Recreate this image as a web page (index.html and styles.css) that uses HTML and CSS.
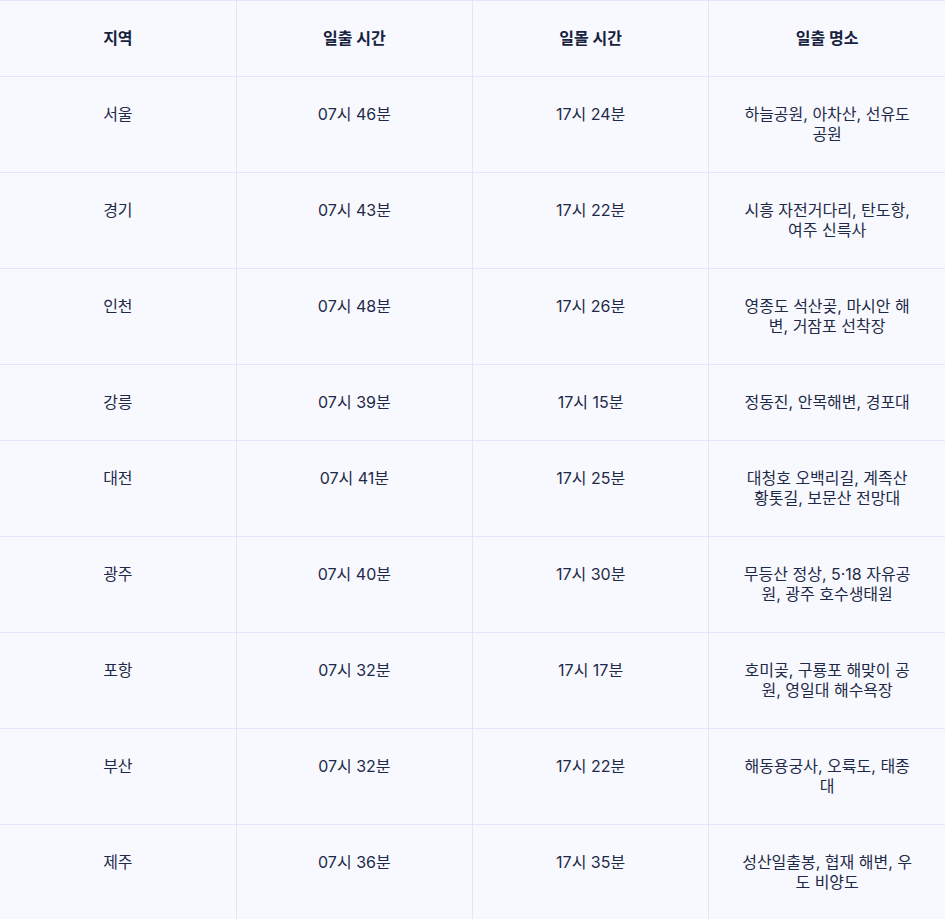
FILE: index.html
```html
<!DOCTYPE html>
<html lang="ko">
<head>
    <meta charset="UTF-8">
    <meta name="viewport" content="width=device-width, initial-scale=1.0">
    <title>일출 시간</title>
    <link rel="stylesheet" href="styles.css">
</head>
<body>

<!-- 지역별 일출 / 일몰 -->
<table class="sun-table">
    <thead>
        <tr>
            <th>지역</th>
            <th>일출 시간</th>
            <th>일몰 시간</th>
            <th>일출 명소</th>
        </tr>
    </thead>
    <tbody>
        <tr>
            <td>서울</td>
            <td>07시 46분</td>
            <td>17시 24분</td>
            <td>하늘공원, 아차산, 선유도 공원</td>
        </tr>
        <tr>
            <td>경기</td>
            <td>07시 43분</td>
            <td>17시 22분</td>
            <td>시흥 자전거다리, 탄도항, 여주 신륵사</td>
        </tr>
        <tr>
            <td>인천</td>
            <td>07시 48분</td>
            <td>17시 26분</td>
            <td>영종도 석산곶, 마시안 해변, 거잠포 선착장</td>
        </tr>
        <tr>
            <td>강릉</td>
            <td>07시 39분</td>
            <td>17시 15분</td>
            <td>정동진, 안목해변, 경포대</td>
        </tr>
        <tr>
            <td>대전</td>
            <td>07시 41분</td>
            <td>17시 25분</td>
            <td>대청호 오백리길, 계족산 황톳길, 보문산 전망대</td>
        </tr>
        <tr>
            <td>광주</td>
            <td>07시 40분</td>
            <td>17시 30분</td>
            <td>무등산 정상, 5·18 자유공원, 광주 호수생태원</td>
        </tr>
        <tr>
            <td>포항</td>
            <td>07시 32분</td>
            <td>17시 17분</td>
            <td>호미곶, 구룡포 해맞이 공원, 영일대 해수욕장</td>
        </tr>
        <tr>
            <td>부산</td>
            <td>07시 32분</td>
            <td>17시 22분</td>
            <td>해동용궁사, 오륙도, 태종대</td>
        </tr>
        <tr>
            <td>제주</td>
            <td>07시 36분</td>
            <td>17시 35분</td>
            <td>성산일출봉, 협재 해변, 우도 비양도</td>
        </tr>
    </tbody>
</table>

</body>
</html>
```

FILE: styles.css
```css
body {
    margin: 0;
    padding: 0;
    background-color: #f8f9fe;
    color: #1e2a48;
    font-family: 'Inter', 'Noto Sans CJK KR', sans-serif;
}

.sun-table {
    width: 945px;
    border-collapse: collapse;
    table-layout: fixed;
    background-color: #f8f9fe;
}

.sun-table th,
.sun-table td {
    padding: 27px 29px 28px;
    border-top: 1px solid #e1e5fb;
    border-left: 1px solid #e1e5fb;
    text-align: center;
    vertical-align: top;
    font-size: 16px;
    line-height: 20px;
}

.sun-table th:first-child,
.sun-table td:first-child {
    border-left: none;
}

.sun-table th {
    font-weight: 700;
    color: #17223f;
}

.sun-table td {
    font-weight: 400;
}
```
